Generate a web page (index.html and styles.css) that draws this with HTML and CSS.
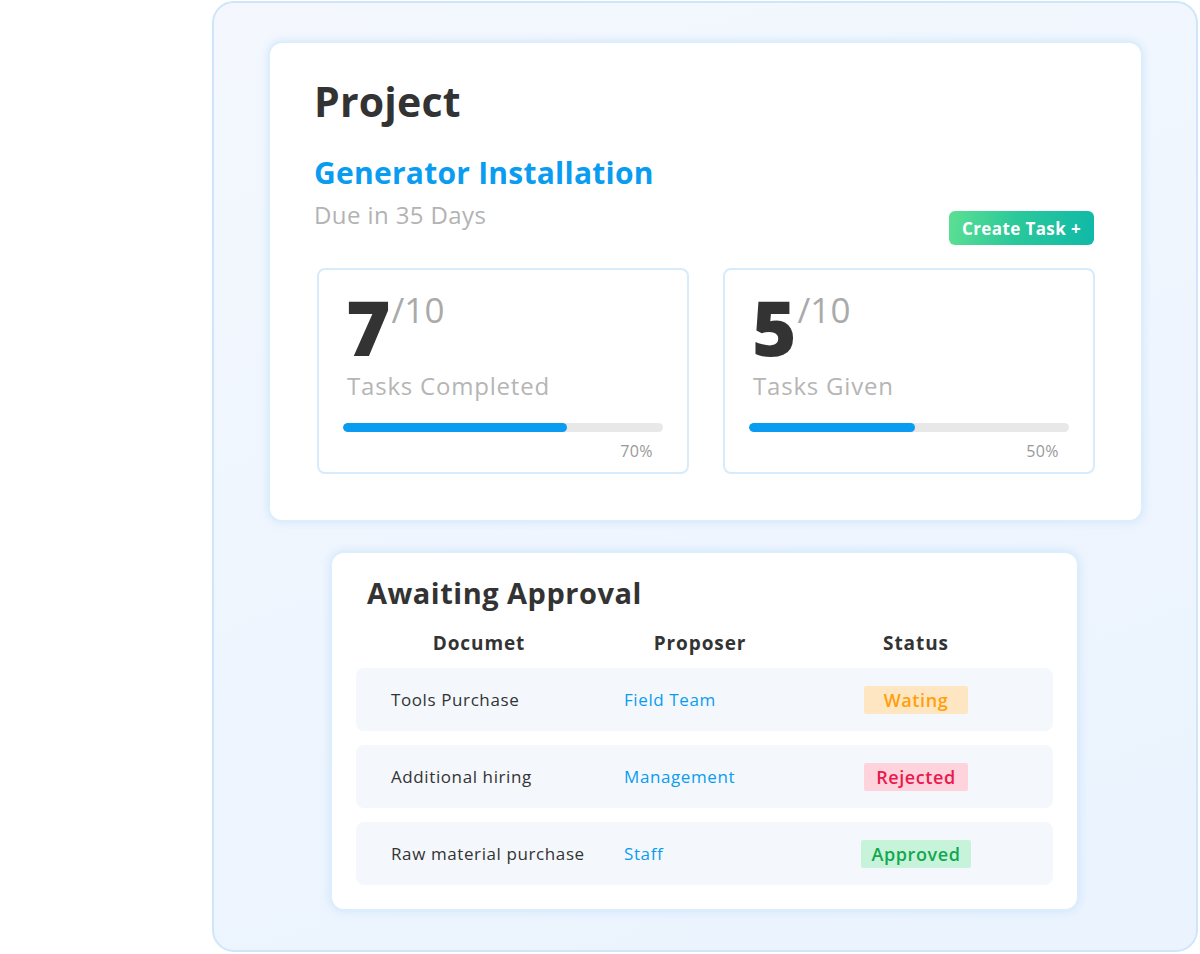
FILE: index.html
```html
<!DOCTYPE html>
<html lang="en">
<head>
<meta charset="utf-8">
<title>Project</title>
<link rel="stylesheet" href="styles.css">
</head>
<body>
<div class="panel">
  <section class="card project">
    <h1 class="title">Project</h1>
    <h2 class="subtitle">Generator Installation</h2>
    <div class="due-row">
      <p class="due">Due in 35 Days</p>
      <button class="create-btn">Create Task +</button>
    </div>
    <div class="stats">
      <div class="stat">
        <div class="stat-num"><span class="big">7</span><span class="of">/10</span></div>
        <div class="stat-label">Tasks Completed</div>
        <div class="bar"><div class="fill" style="width:70%"></div></div>
        <div class="pct">70%</div>
      </div>
      <div class="stat">
        <div class="stat-num"><span class="big">5</span><span class="of">/10</span></div>
        <div class="stat-label">Tasks Given</div>
        <div class="bar"><div class="fill" style="width:52%"></div></div>
        <div class="pct">50%</div>
      </div>
    </div>
  </section>

  <section class="card approval">
    <h3 class="approval-title">Awaiting Approval</h3>
    <div class="thead">
      <div>Documet</div>
      <div>Proposer</div>
      <div>Status</div>
    </div>
    <div class="row">
      <div class="doc">Tools Purchase</div>
      <div class="who">Field Team</div>
      <div class="status"><span class="badge wait">Wating</span></div>
    </div>
    <div class="row">
      <div class="doc">Additional hiring</div>
      <div class="who">Management</div>
      <div class="status"><span class="badge rej">Rejected</span></div>
    </div>
    <div class="row">
      <div class="doc">Raw material purchase</div>
      <div class="who">Staff</div>
      <div class="status"><span class="badge ok">Approved</span></div>
    </div>
  </section>
</div>
</body>
</html>
```
FILE: styles.css
```css
* { box-sizing: border-box; }
html, body {
  margin: 0;
  padding: 0;
  background: #ffffff;
  font-family: "Open Sans", "DejaVu Sans", sans-serif;
  color: #333333;
}
.panel {
  margin: 1px 0 0 212px;
  width: 986px;
  height: 951px;
  border: 2px solid #cfe5fa;
  border-radius: 22px;
  background: linear-gradient(160deg, #f4f8fe 0%, #eef5fe 60%, #eaf3fe 100%);
  padding: 38px 0 0 54px;
  display: flex;
  flex-direction: column;
}
.card {
  flex-shrink: 0;
  background: #ffffff;
  border-radius: 14px;
  border: 2px solid #dcedfc;
  box-shadow: 0 0 10px rgba(150, 200, 245, 0.35);
}
.project {
  width: 875px;
  height: 481px;
  padding: 33px 46px 0 44px;
  display: flex;
  flex-direction: column;
}
.title {
  margin: 0;
  font-size: 41px;
  font-weight: 700;
  line-height: 50px;
  color: #333333;
  letter-spacing: 0.2px;
}
.subtitle {
  margin: 29px 0 0 0;
  font-size: 30px;
  font-weight: 700;
  line-height: 36px;
  color: #0a9cf0;
  letter-spacing: 0.25px;
}
.due-row {
  display: flex;
  justify-content: space-between;
  align-items: flex-start;
}
.due {
  margin: 9px 0 0 0;
  font-size: 24px;
  line-height: 30px;
  color: #b3b3b3;
  letter-spacing: 0.4px;
}
.create-btn {
  margin: 20px 1px 0 0;
  width: 145px;
  height: 34px;
  border: none;
  border-radius: 6px;
  background: linear-gradient(100deg, #5ddf93 0%, #2bc99a 45%, #0fb9a8 100%);
  color: #ffffff;
  font-family: inherit;
  font-size: 17px;
  font-weight: 700;
  letter-spacing: 0.4px;
  padding: 0;
}
.stats {
  margin-top: 23px;
  display: flex;
  gap: 34px;
  padding-left: 3px;
}
.stat {
  width: 373px;
  height: 206px;
  border: 2px solid #d6ebfb;
  border-radius: 8px;
  padding: 18px 24px 0 24px;
  display: flex;
  flex-direction: column;
}
.stat-num {
  display: flex;
  align-items: flex-start;
  padding-left: 3px;
  height: 78px;
}
.big {
  font-size: 76px;
  font-weight: 800;
  line-height: 78px;
  height: 78px;
  color: #333333;
}
.of {
  font-size: 35px;
  line-height: 44px;
  color: #aaaaaa;
  margin-left: 1px;
}
.stat-label {
  margin-top: 4px;
  padding-left: 4px;
  font-size: 24px;
  line-height: 32px;
  color: #b5b5b5;
  letter-spacing: 0.8px;
}
.bar {
  margin-top: 21px;
  height: 9px;
  border-radius: 5px;
  background: #e8e8e8;
  overflow: hidden;
}
.fill {
  height: 100%;
  border-radius: 5px;
  background: #0a9cf0;
}
.pct {
  margin-top: 8px;
  padding-right: 10px;
  text-align: right;
  font-size: 16px;
  line-height: 22px;
  color: #999999;
  letter-spacing: 0.4px;
}
.approval {
  margin: 29px 0 0 62px;
  width: 749px;
  height: 360px;
  padding: 20px 24px 0 24px;
}
.approval-title {
  margin: 0 0 0 11px;
  font-size: 29px;
  font-weight: 700;
  line-height: 40px;
  color: #333333;
  letter-spacing: 0.5px;
}
.thead {
  display: flex;
  margin-top: 18px;
  padding-left: 35px;
  height: 37px;
  align-items: flex-start;
  font-size: 19px;
  line-height: 24px;
  font-weight: 700;
  color: #333333;
  letter-spacing: 0.9px;
}
.thead div { text-align: center; }
.thead div:nth-child(1) { width: 176px; }
.thead div:nth-child(2) { width: 152px; margin-left: 57px; }
.thead div:nth-child(3) { flex: 1; margin-left: 3px; }
.row {
  display: flex;
  align-items: center;
  padding-left: 35px;
  height: 63px;
  margin-top: 14px;
  background: #f4f8fc;
  border-radius: 8px;
  font-size: 17px;
  letter-spacing: 0.6px;
}
.thead + .row { margin-top: 0; }
.doc { width: 176px; color: #333333; white-space: nowrap; }
.who { width: 152px; margin-left: 57px; color: #0a9cf0; }
.status { flex: 1; margin-left: 3px; display: flex; justify-content: center; }
.badge {
  display: inline-block;
  height: 28px;
  line-height: 28px;
  border-radius: 2px;
  font-size: 18px;
  font-weight: 600;
  text-align: center;
  letter-spacing: 0.6px;
}
.wait { width: 104px; background: #ffe6c3; color: #ff9f0a; }
.rej { width: 104px; background: #ffd3db; color: #e8194f; }
.ok { width: 110px; background: #c7f3da; color: #12a84e; }
```
